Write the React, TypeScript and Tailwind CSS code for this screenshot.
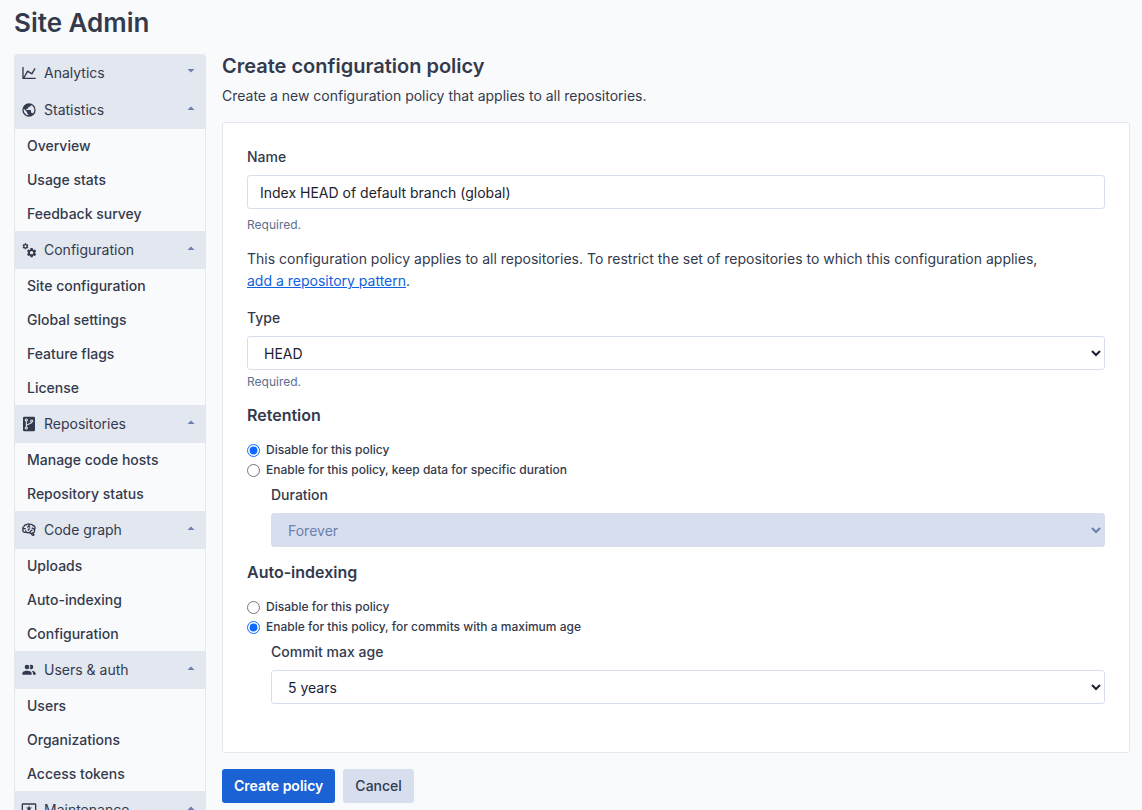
import { useState, type ReactNode } from 'react'

interface NavGroup { title: string; icon: ReactNode; items: string[] }

function Icon({ d }: { d: string }) {
  return (
    <svg viewBox="0 0 24 24" className="size-4 shrink-0" fill="currentColor" aria-hidden="true">
      <path d={d} />
    </svg>
  )
}

const CHART = 'M16,11.78L20.24,4.45L21.97,5.45L16.74,14.5L10.23,10.75L5.46,19H22V21H2V3H4V17.54L9.5,8L16,11.78Z'
const EARTH = 'M17.9,17.39C17.64,16.59 16.89,16 16,16H15V13A1,1 0 0,0 14,12H8V10H10A1,1 0 0,0 11,9V7H13A2,2 0 0,0 15,5V4.59C17.93,5.77 20,8.64 20,12C20,14.08 19.2,15.97 17.9,17.39M11,19.93C7.05,19.44 4,16.08 4,12C4,11.38 4.08,10.78 4.21,10.21L9,15V16A2,2 0 0,0 11,18M12,2A10,10 0 0,0 2,12A10,10 0 0,0 12,22A10,10 0 0,0 22,12A10,10 0 0,0 12,2Z'
const COGS = 'M15.9,18.45C17.25,18.45 18.35,17.35 18.35,16C18.35,14.65 17.25,13.55 15.9,13.55C14.54,13.55 13.45,14.65 13.45,16C13.45,17.35 14.54,18.45 15.9,18.45M21.1,16.68L22.58,17.84C22.71,17.95 22.75,18.13 22.66,18.29L21.26,20.71C21.17,20.86 21,20.92 20.83,20.86L19.09,20.16C18.73,20.44 18.33,20.67 17.91,20.85L17.64,22.7C17.62,22.87 17.47,23 17.3,23H14.5C14.32,23 14.18,22.87 14.15,22.7L13.89,20.85C13.46,20.67 13.07,20.44 12.71,20.16L10.96,20.86C10.81,20.92 10.62,20.86 10.54,20.71L9.14,18.29C9.05,18.13 9.09,17.95 9.22,17.84L10.7,16.68L10.65,16L10.7,15.31L9.22,14.16C9.09,14.05 9.05,13.86 9.14,13.71L10.54,11.29C10.62,11.13 10.81,11.07 10.96,11.13L12.71,11.84C13.07,11.56 13.46,11.32 13.89,11.15L14.15,9.29C14.18,9.13 14.32,9 14.5,9H17.3C17.47,9 17.62,9.13 17.64,9.29L17.91,11.15C18.33,11.32 18.73,11.56 19.09,11.84L20.83,11.13C21,11.07 21.17,11.13 21.26,11.29L22.66,13.71C22.75,13.86 22.71,14.05 22.58,14.16L21.1,15.31L21.15,16L21.1,16.68M6.69,8.07C7.56,8.07 8.26,7.37 8.26,6.5C8.26,5.63 7.56,4.92 6.69,4.92A1.58,1.58 0 0,0 5.11,6.5C5.11,7.37 5.82,8.07 6.69,8.07M10.03,6.94L11,7.68C11.07,7.75 11.09,7.87 11.03,7.97L10.13,9.53C10.08,9.63 9.96,9.67 9.86,9.63L8.74,9.18L8,9.62L7.81,10.81C7.79,10.92 7.7,11 7.59,11H5.79C5.67,11 5.58,10.92 5.56,10.81L5.4,9.62L4.64,9.18L3.5,9.63C3.41,9.67 3.3,9.63 3.24,9.53L2.34,7.97C2.28,7.87 2.31,7.75 2.39,7.68L3.34,6.94L3.31,6.5L3.34,6.06L2.39,5.32C2.31,5.25 2.28,5.13 2.34,5.03L3.24,3.47C3.3,3.37 3.41,3.33 3.5,3.37L4.63,3.82L5.4,3.38L5.56,2.19C5.58,2.08 5.67,2 5.79,2H7.59C7.7,2 7.79,2.08 7.81,2.19L8,3.38L8.74,3.82L9.86,3.37C9.96,3.33 10.08,3.37 10.13,3.47L11.03,5.03C11.09,5.13 11.07,5.25 11,5.32L10.03,6.06L10.06,6.5L10.03,6.94Z'
const BRAIN = 'M21.33,12.91C21.42,14.46 20.71,15.95 19.44,16.86L20.21,18.35C20.44,18.8 20.47,19.33 20.27,19.8C20.08,20.27 19.69,20.64 19.21,20.8L18.42,21.05C18.25,21.11 18.06,21.14 17.88,21.14C17.37,21.14 16.89,20.91 16.56,20.5L14.44,18C13.55,17.85 12.71,17.47 12,16.9C11.5,17.05 11,17.13 10.5,17.13C9.62,17.13 8.74,16.86 8,16.34C7.47,16.5 6.93,16.57 6.38,16.56C5.59,16.57 4.81,16.41 4.08,16.11C2.65,15.47 1.7,14.07 1.65,12.5C1.57,11.78 1.69,11.05 2,10.39C1.71,9.64 1.68,8.82 1.93,8.06C2.3,7.11 3,6.32 3.87,5.82C4.45,4.13 6.08,3 7.87,3.12C9.47,1.62 11.92,1.46 13.7,2.75C14.12,2.64 14.56,2.58 15,2.58C16.36,2.55 17.65,3.15 18.5,4.22C20.54,4.75 22,6.57 22.08,8.69C22.13,9.8 21.83,10.89 21.22,11.82C21.29,12.18 21.33,12.54 21.33,12.91M16.33,11.5C16.9,11.57 17.35,12 17.35,12.57A1,1 0 0,1 16.35,13.57H15.72C15.4,14.47 14.84,15.26 14.1,15.86C14.35,15.95 14.61,16 14.87,16.07C20,16 19.4,12.87 19.4,12.82C19.34,11.39 18.14,10.27 16.71,10.33A1,1 0 0,1 15.71,9.33A1,1 0 0,1 16.71,8.33C17.94,8.36 19.12,8.82 20.04,9.63C20.09,9.34 20.12,9.04 20.12,8.74C20.06,7.5 19.5,6.42 17.25,6.21C16,3.25 12.85,4.89 12.85,5.81V5.81C12.82,6.04 13.06,6.53 13.1,6.56A1,1 0 0,1 14.1,7.56C14.1,8.11 13.65,8.56 13.1,8.56V8.56C12.57,8.54 12.07,8.34 11.67,8C11.19,8.31 10.64,8.5 10.07,8.56V8.56C9.5,8.61 9.03,8.21 9,7.66C8.92,7.1 9.33,6.61 9.88,6.56C10.04,6.54 10.82,6.42 10.82,5.79V5.79C10.82,5.13 11.07,4.5 11.5,4C10.58,3.75 9.59,4.08 8.59,5.29C6.75,5 6,5.25 5.45,7.2C4.5,7.67 4,8 3.78,9C4.86,8.78 5.97,8.87 7,9.25C7.5,9.44 7.78,10 7.59,10.54C7.4,11.06 6.82,11.32 6.3,11.13C5.57,10.81 4.75,10.79 4,11.07C3.68,11.34 3.68,11.9 3.68,12.34C3.68,13.08 4.05,13.77 4.68,14.17C5.21,14.44 5.8,14.58 6.39,14.57C6.24,14.31 6.11,14.04 6,13.76C5.81,13.22 6.1,12.63 6.64,12.44C7.18,12.25 7.77,12.54 7.96,13.08C8.36,14.22 9.38,15 10.58,15.13C11.95,15.06 13.17,14.25 13.77,13C14,11.62 15.11,11.5 16.33,11.5M18.33,18.97L17.71,17.67L17,17.83L18,19.08L18.33,18.97M13.68,10.36C13.7,9.83 13.3,9.38 12.77,9.33C12.06,9.29 11.37,9.53 10.84,10C10.27,10.58 9.97,11.38 10,12.19A1,1 0 0,0 11,13.19C11.57,13.19 12,12.74 12,12.19C12,11.92 12.07,11.65 12.23,11.43C12.35,11.33 12.5,11.28 12.66,11.28C13.21,11.31 13.68,10.9 13.68,10.36Z'
const PEOPLE = 'M16 17V19H2V17S2 13 9 13 16 17 16 17M12.5 7.5A3.5 3.5 0 1 0 9 11A3.5 3.5 0 0 0 12.5 7.5M15.94 13A5.32 5.32 0 0 1 18 17V19H22V17S22 13.37 15.94 13M15 4A3.39 3.39 0 0 0 13.07 4.59A5 5 0 0 1 13.07 10.41A3.39 3.39 0 0 0 15 11A3.5 3.5 0 0 0 15 4Z'
const MONITOR = 'M21 16V4H3V16H21M21 2A2 2 0 0 1 23 4V16A2 2 0 0 1 21 18H14V20H16V22H8V20H10V18H3C1.89 18 1 17.1 1 16V4C1 2.89 1.89 2 3 2H21M12 5L13.2 8.3H16.5L13.9 10.4L14.9 13.8L12 11.8L9.1 13.8L10.1 10.4L7.5 8.3H10.8Z'

function RepoIcon() {
  return (
    <svg viewBox="0 0 24 24" className="size-4 shrink-0" fill="none" stroke="#e2e7f0" strokeWidth="1.6" aria-hidden="true">
      <rect x="3" y="1" width="18" height="22" rx="2" fill="#343a4d" stroke="none" />
      <path d="M8 7V17M16 9C16 13 8 11 8 15" />
      <circle cx="8" cy="6" r="1.6" />
      <circle cx="8" cy="18" r="1.6" />
      <circle cx="16" cy="7.5" r="1.6" />
    </svg>
  )
}

const GROUPS: NavGroup[] = [
  { title: 'Analytics', icon: <Icon d={CHART} />, items: [] },
  { title: 'Statistics', icon: <Icon d={EARTH} />, items: ['Overview', 'Usage stats', 'Feedback survey'] },
  { title: 'Configuration', icon: <Icon d={COGS} />, items: ['Site configuration', 'Global settings', 'Feature flags', 'License'] },
  { title: 'Repositories', icon: <RepoIcon />, items: ['Manage code hosts', 'Repository status'] },
  { title: 'Code graph', icon: <Icon d={BRAIN} />, items: ['Uploads', 'Auto-indexing', 'Configuration'] },
  { title: 'Users & auth', icon: <Icon d={PEOPLE} />, items: ['Users', 'Organizations', 'Access tokens'] },
  { title: 'Maintenance', icon: <Icon d={MONITOR} />, items: [] },
]

function Sidebar() {
  return (
    <nav className="w-48 shrink-0 rounded-t-[3px] border border-[#e2e7f0] overflow-hidden">
      {GROUPS.map((g, i) => (
        <div key={g.title}>
          <button
            type="button"
            className={`flex w-full items-center bg-[#e2e7f0] pl-1.5 pr-2.5 text-left ${i === 0 ? 'h-9' : 'h-[38px]'}`}
          >
            {g.icon}
            <span className="ml-[7px] flex-1">{g.title}</span>
            <svg viewBox="0 0 8 4" className="mb-1 h-1 w-2 text-[#6d7fae]" fill="currentColor" aria-hidden="true">
              <path d={i === 0 ? 'M0.5 0H7.5L4 3.5Z' : 'M0.5 4H7.5L4 0.5Z'} />
            </svg>
          </button>
          {g.items.map(item => (
            <a key={item} href="#" className="flex h-[34px] items-center pl-3 font-medium">{item}</a>
          ))}
        </div>
      ))}
    </nav>
  )
}

interface SelectProps { id: string; label: string; options: string[]; disabled?: boolean }

function SelectField({ id, label, options, disabled }: SelectProps) {
  return (
    <>
      <label htmlFor={id} className="block font-medium leading-5">{label}</label>
      <select
        id={id}
        disabled={disabled}
        className="mt-2 block h-[34px] w-full rounded-[3px] border border-[#d7deed] bg-white px-3 text-[#1d212f] disabled:bg-[#d7deed] disabled:text-[#6d7fae] disabled:opacity-100"
      >
        {options.map(o => <option key={o}>{o}</option>)}
      </select>
    </>
  )
}

interface RadioProps { name: string; labels: string[]; value: number; onChange: (v: number) => void }

function RadioPair({ name, labels, value, onChange }: RadioProps) {
  return (
    <>
      {labels.map((label, i) => (
        <label key={label} className="flex h-5 items-center text-xs font-medium">
          <input
            type="radio"
            name={name}
            checked={value === i}
            onChange={() => onChange(i)}
            className="mr-1.5 size-[13px] accent-[#0f6bff]"
          />
          {label}
        </label>
      ))}
    </>
  )
}

export default function App() {
  const [name, setName] = useState('Index HEAD of default branch (global)')
  const [retention, setRetention] = useState(0)
  const [indexing, setIndexing] = useState(1)

  return (
    <div className="h-screen overflow-hidden bg-[#f9fafc] pl-3.5 pr-3 font-['Inter',sans-serif] text-sm text-[#343a4d]">
      <h1 className="pt-[7px] text-[26px] font-semibold leading-8">Site Admin</h1>
      <div className="mt-[15px] flex items-start gap-4">
        <Sidebar />
        <main className="min-w-0 flex-1">
          <h2 className="text-xl font-semibold leading-6">Create configuration policy</h2>
          <p className="mt-2 leading-5">Create a new configuration policy that applies to all repositories.</p>

          <form id="policy" className="mt-4 rounded-[3px] border border-[#e2e7f0] bg-white px-6 pt-6 pb-12" onSubmit={e => e.preventDefault()}>
            <label htmlFor="name" className="block font-medium leading-5">Name</label>
            <input
              id="name"
              value={name}
              onChange={e => setName(e.target.value)}
              className="mt-2 block h-[34px] w-full rounded-[3px] border border-[#d7deed] bg-white px-3 text-[#1d212f]"
            />
            <p className="mt-2 text-xs text-[#5e6e8c]">Required.</p>

            <p className="mt-[15px] leading-[22px]">
              This configuration policy applies to all repositories. To restrict the set of repositories to which this configuration applies,{' '}
              <button type="button" className="inline-block text-[#0f62dd] underline">add a repository pattern</button>.
            </p>

            <div className="mt-4">
              <SelectField id="type" label="Type" options={['HEAD', 'Tag', 'Branch']} />
              <p className="mt-1 text-xs text-[#5e6e8c]">Required.</p>
            </div>

            <h3 className="my-[13px] text-base font-semibold">Retention</h3>
            <RadioPair
              name="retention"
              labels={['Disable for this policy', 'Enable for this policy, keep data for specific duration']}
              value={retention}
              onChange={setRetention}
            />
            <div className="mt-[5px] ml-6">
              <SelectField id="duration" label="Duration" options={['Forever', '1 year', '5 years']} disabled={retention === 0} />
            </div>

            <h3 className="my-[13px] text-base font-semibold">Auto-indexing</h3>
            <RadioPair
              name="indexing"
              labels={['Disable for this policy', 'Enable for this policy, for commits with a maximum age']}
              value={indexing}
              onChange={setIndexing}
            />
            <div className="mt-[5px] ml-6">
              <SelectField id="age" label="Commit max age" options={['5 years', '1 year', 'Forever']} disabled={indexing === 0} />
            </div>
          </form>

          <div className="mt-4 flex gap-2 font-medium">
            <button type="submit" form="policy" className="h-[34px] rounded-[3px] bg-[#1b62d4] px-3 font-semibold text-white">Create policy</button>
            <button type="button" className="h-[34px] rounded-[3px] bg-[#d7deed] px-3">Cancel</button>
          </div>
        </main>
      </div>
    </div>
  )
}
